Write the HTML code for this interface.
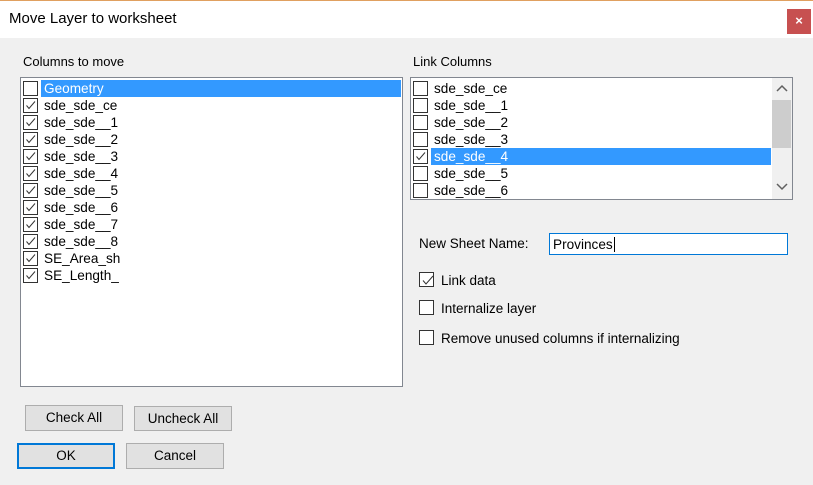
<!DOCTYPE html>
<html><head><style>
body{margin:0;width:813px;height:485px;background:#f0f0f0;font-family:"Liberation Sans",sans-serif;font-size:12px;color:#000;position:relative;overflow:hidden}
.a{position:absolute}
.title{left:0;top:0;width:813px;height:38px;background:#fff;border-top:1px solid #e0a060;box-sizing:border-box}
.close{left:787px;top:9px;width:24px;height:25px;background:#c75050;color:#fff;font-size:13px;text-align:center;line-height:24px;font-weight:bold}
.list{background:#fff;border:1px solid #828790;box-sizing:border-box}
.it{position:absolute;left:2px;height:17px;font-size:13.6px;line-height:17px;white-space:nowrap}
.cb{position:absolute;left:0;top:1px;width:13px;height:13px;border:1px solid #333;background:#fff}
.cb svg{position:absolute;left:1px;top:1px}
.tx{position:absolute;left:21px;top:0}
.sel .tx{background:#3399ff;color:#fff;left:18px;padding-left:3px}
.btn{background:#e1e1e1;border:1px solid #adadad;box-sizing:border-box;text-align:center;font-size:13.5px}
.cb2{position:absolute;width:13px;height:13px;border:1px solid #333;background:#fff}
.cb2 svg{position:absolute;left:1px;top:1px}
.lb{font-size:13.5px;white-space:nowrap}
</style></head><body>
<div class="a title"></div>
<div class="a" style="left:9px;top:10px;font-size:15px;color:#000">Move Layer to worksheet</div>
<div class="a close">×</div>
<div class="a lb" style="left:23px;top:54px;font-size:13px">Columns to move</div>
<div class="a lb" style="left:413px;top:54px;font-size:13px">Link Columns</div>

<div class="a list" style="left:20px;top:77px;width:383px;height:310px">
<div class="it sel" style="top:2px;width:378px"><span class="cb"></span><span class="tx" style="right:0">Geometry</span></div>
<div class="it" style="top:19px"><span class="cb"><svg width="11" height="11"><polyline points="1.5,5.5 4,8.5 10,1.5" fill="none" stroke="#333" stroke-width="1"/></svg></span><span class="tx">sde_sde_ce</span></div>
<div class="it" style="top:36px"><span class="cb"><svg width="11" height="11"><polyline points="1.5,5.5 4,8.5 10,1.5" fill="none" stroke="#333" stroke-width="1"/></svg></span><span class="tx">sde_sde__1</span></div>
<div class="it" style="top:53px"><span class="cb"><svg width="11" height="11"><polyline points="1.5,5.5 4,8.5 10,1.5" fill="none" stroke="#333" stroke-width="1"/></svg></span><span class="tx">sde_sde__2</span></div>
<div class="it" style="top:70px"><span class="cb"><svg width="11" height="11"><polyline points="1.5,5.5 4,8.5 10,1.5" fill="none" stroke="#333" stroke-width="1"/></svg></span><span class="tx">sde_sde__3</span></div>
<div class="it" style="top:87px"><span class="cb"><svg width="11" height="11"><polyline points="1.5,5.5 4,8.5 10,1.5" fill="none" stroke="#333" stroke-width="1"/></svg></span><span class="tx">sde_sde__4</span></div>
<div class="it" style="top:104px"><span class="cb"><svg width="11" height="11"><polyline points="1.5,5.5 4,8.5 10,1.5" fill="none" stroke="#333" stroke-width="1"/></svg></span><span class="tx">sde_sde__5</span></div>
<div class="it" style="top:121px"><span class="cb"><svg width="11" height="11"><polyline points="1.5,5.5 4,8.5 10,1.5" fill="none" stroke="#333" stroke-width="1"/></svg></span><span class="tx">sde_sde__6</span></div>
<div class="it" style="top:138px"><span class="cb"><svg width="11" height="11"><polyline points="1.5,5.5 4,8.5 10,1.5" fill="none" stroke="#333" stroke-width="1"/></svg></span><span class="tx">sde_sde__7</span></div>
<div class="it" style="top:155px"><span class="cb"><svg width="11" height="11"><polyline points="1.5,5.5 4,8.5 10,1.5" fill="none" stroke="#333" stroke-width="1"/></svg></span><span class="tx">sde_sde__8</span></div>
<div class="it" style="top:172px"><span class="cb"><svg width="11" height="11"><polyline points="1.5,5.5 4,8.5 10,1.5" fill="none" stroke="#333" stroke-width="1"/></svg></span><span class="tx">SE_Area_sh</span></div>
<div class="it" style="top:189px"><span class="cb"><svg width="11" height="11"><polyline points="1.5,5.5 4,8.5 10,1.5" fill="none" stroke="#333" stroke-width="1"/></svg></span><span class="tx">SE_Length_</span></div>
</div>

<div class="a list" style="left:410px;top:77px;width:383px;height:123px;overflow:hidden">
<div class="it" style="top:2px"><span class="cb"></span><span class="tx">sde_sde_ce</span></div>
<div class="it" style="top:19px"><span class="cb"></span><span class="tx">sde_sde__1</span></div>
<div class="it" style="top:36px"><span class="cb"></span><span class="tx">sde_sde__2</span></div>
<div class="it" style="top:53px"><span class="cb"></span><span class="tx">sde_sde__3</span></div>
<div class="it sel" style="top:70px;width:358px"><span class="cb"><svg width="11" height="11"><polyline points="1.5,5.5 4,8.5 10,1.5" fill="none" stroke="#333" stroke-width="1"/></svg></span><span class="tx" style="right:0">sde_sde__4</span></div>
<div class="it" style="top:87px"><span class="cb"></span><span class="tx">sde_sde__5</span></div>
<div class="it" style="top:104px"><span class="cb"></span><span class="tx">sde_sde__6</span></div>
<div class="a" style="left:361px;top:0;width:20px;height:121px;background:#f0f0f0"></div>
<div class="a" style="left:361px;top:22px;width:19px;height:48px;background:#cdcdcd"></div>
<svg class="a" style="left:364px;top:6px" width="14" height="10"><polyline points="2,7 7,2 12,7" fill="none" stroke="#606060" stroke-width="1.5"/></svg>
<svg class="a" style="left:364px;top:103px" width="14" height="10"><polyline points="2,3 7,8 12,3" fill="none" stroke="#606060" stroke-width="1.5"/></svg>
</div>

<div class="a lb" style="left:419px;top:236px">New Sheet Name:</div>
<div class="a" style="left:549px;top:233px;width:239px;height:22px;border:1px solid #0078d7;background:#fff;box-sizing:border-box"><span style="position:absolute;left:3px;top:3px;font-size:13.6px">Provinces</span><span style="position:absolute;left:64px;top:3px;width:1px;height:15px;background:#000"></span></div>

<div class="cb2" style="left:419px;top:272px"><svg width="13" height="13"><polyline points="2,6.5 5,10 12,2" fill="none" stroke="#333" stroke-width="1"/></svg></div>
<div class="a lb" style="left:441px;top:273px">Link data</div>
<div class="cb2" style="left:419px;top:300px"></div>
<div class="a lb" style="left:441px;top:301px">Internalize layer</div>
<div class="cb2" style="left:419px;top:330px"></div>
<div class="a lb" style="left:441px;top:331px">Remove unused columns if internalizing</div>

<div class="a btn" style="left:25px;top:405px;width:98px;height:26px;line-height:24px">Check All</div>
<div class="a btn" style="left:134px;top:406px;width:98px;height:25px;line-height:24px">Uncheck All</div>
<div class="a btn" style="left:17px;top:443px;width:98px;height:26px;line-height:22px;border:2px solid #0078d7">OK</div>
<div class="a btn" style="left:126px;top:443px;width:98px;height:26px;line-height:24px">Cancel</div>
</body></html>
